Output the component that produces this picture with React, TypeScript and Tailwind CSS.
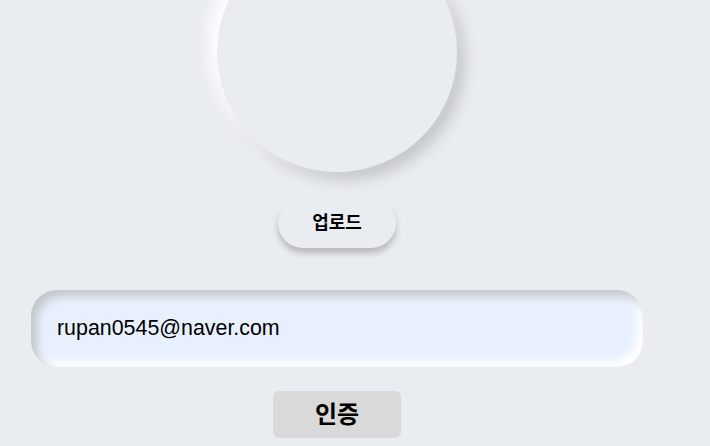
export default function App() {
  return (
    <div className="h-[446px] w-[710px] overflow-hidden bg-[#e9ecf0] font-['Liberation_Sans','Noto_Sans_CJK_KR',sans-serif]">
      <div className="flex w-[674px] flex-col items-center">
        <div className="-mt-[68px] h-[240px] w-[240px] rounded-full bg-[#e9ecf0] shadow-[-8px_-8px_16px_#ffffff,8px_8px_14px_#c4c7cb]" />
        <button className="mt-[26px] h-[50px] w-[118px] rounded-full bg-[#e9ecf0] text-[18px] font-bold text-black shadow-[0_5px_6px_rgba(0,0,0,0.22)]">
          업로드
        </button>
        <div className="mt-[42px] flex h-[77px] w-[612px] items-center rounded-[26px] bg-[#e8f0fe] px-[26px] shadow-[inset_6px_6px_10px_#c3c6ca,inset_-6px_-6px_10px_#ffffff]">
          <span className="text-[21.4px] text-black">rupan0545@naver.com</span>
        </div>
        <button className="mt-[24px] h-[47px] w-[128px] rounded-[6px] bg-[#d9d9d9] text-[24px] font-bold text-black">
          인증
        </button>
      </div>
    </div>
  );
}
